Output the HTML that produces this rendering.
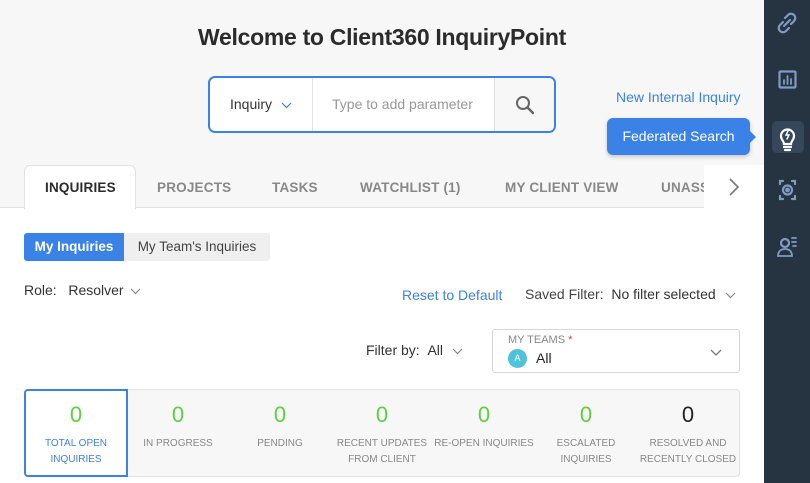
<!DOCTYPE html>
<html><head><style>
*{box-sizing:border-box;margin:0;padding:0}
body{width:810px;height:483px;overflow:hidden;font-family:"Liberation Sans",sans-serif;background:#fff;position:relative;color:#333}
.top{position:absolute;left:0;top:0;width:764px;height:208px;background:#f7f7f7;border-bottom:1px solid #e2e2e2}
.side{position:absolute;left:764px;top:0;width:46px;height:483px;background:#263340}
.abs{position:absolute;white-space:nowrap}
h1{position:absolute;left:0;width:764px;top:24px;text-align:center;font-size:23px;font-weight:bold;color:#2b2b2b;letter-spacing:-0.3px}
.search{position:absolute;left:208px;top:76px;width:348px;height:57px;border:2px solid #3b82e6;border-radius:7px;background:#fff;overflow:hidden}
.tab{position:absolute;top:180px;font-size:13.5px;font-weight:bold;color:#888;letter-spacing:0.2px}
.stat{position:absolute;top:390px;width:102px;text-align:center}
.stat b{display:block;font-size:22px;color:#5dd13d;font-weight:normal;margin-top:12px}
.stat span{display:block;font-size:10px;color:#888;line-height:16px;margin-top:8px}
.chev{display:inline-block;vertical-align:middle;margin-left:6px}
</style></head><body>
<div class="top"></div>
<h1>Welcome to Client360 InquiryPoint</h1>
<div class="search">
 <div class="abs" style="left:20px;top:18px;font-size:14px;color:#333">Inquiry<svg class="chev" style="margin-left:9px" width="11" height="7"><path d="M1 1l4.5 4.5L10 1" fill="none" stroke="#3b82e6" stroke-width="1.2"/></svg></div>
 <div class="abs" style="left:102px;top:0;width:1px;height:53px;background:#e2e2e2"></div>
 <div class="abs" style="left:122px;top:18px;font-size:14px;color:#999">Type to add parameter</div>
 <div class="abs" style="left:284px;top:0;width:62px;height:53px;background:#f7f7f7;border-left:1px solid #e2e2e2"></div>
 <svg class="abs" style="left:305px;top:17px" width="20" height="20" viewBox="0 0 20 20"><circle cx="8" cy="8" r="6" fill="none" stroke="#666" stroke-width="2"/><path d="M12.5 12.5L18 18" stroke="#666" stroke-width="2.4" stroke-linecap="round"/></svg>
</div>
<div class="abs" style="left:616px;top:89px;font-size:14px;color:#3b82e6">New Internal Inquiry</div>
<div class="abs" style="left:607px;top:118px;width:143px;height:37px;background:#3b82e6;border-radius:6px;color:#fff;font-size:14px;line-height:37px;text-align:center;box-shadow:0 2px 4px rgba(0,0,0,.2)">Federated Search</div>
<div class="abs" style="left:749px;top:130px;width:0;height:0;border-top:7px solid transparent;border-bottom:7px solid transparent;border-left:7px solid #3b82e6"></div>
<div class="abs" style="left:24px;top:165px;width:112px;height:44px;background:#fff;border:1px solid #e2e2e2;border-bottom:none;border-radius:6px 6px 0 0"></div>
<div class="tab" style="left:45px;color:#2b2b2b">INQUIRIES</div>
<div class="tab" style="left:157px">PROJECTS</div>
<div class="tab" style="left:272px">TASKS</div>
<div class="tab" style="left:360px">WATCHLIST (1)</div>
<div class="tab" style="left:505px">MY CLIENT VIEW</div>
<div class="tab" style="left:661px;width:44px;overflow:hidden">UNASSIGNED</div>
<div class="abs" style="left:704px;top:165px;width:60px;height:43px;background:#fff"></div>
<svg class="abs" style="left:727px;top:177px" width="14" height="20"><path d="M3 2l8 8-8 8" fill="none" stroke="#777" stroke-width="1.6"/></svg>

<div class="abs" style="left:24px;top:233px;width:100px;height:28px;background:#3b82e6;border-radius:3px 0 0 3px;color:#fff;font-size:13.5px;font-weight:bold;line-height:28px;text-align:center">My Inquiries</div>
<div class="abs" style="left:124px;top:233px;width:146px;height:28px;background:#efefef;border-radius:0 3px 3px 0;color:#444;font-size:13.5px;line-height:28px;text-align:center">My Team's Inquiries</div>
<div class="abs" style="left:24px;top:282px;font-size:14px;color:#333">Role: &nbsp; Resolver<svg class="chev" width="11" height="7"><path d="M1 1l4.5 4.5L10 1" fill="none" stroke="#888" stroke-width="1.2"/></svg></div>
<div class="abs" style="left:402px;top:287px;font-size:14px;color:#3b82e6">Reset to Default</div>
<div class="abs" style="left:525px;top:286px;font-size:14px;color:#333"><span style="color:#444">Saved Filter:</span> &nbsp;No filter selected<svg class="chev" style="margin-left:9px" width="11" height="7"><path d="M1 1l4.5 4.5L10 1" fill="none" stroke="#888" stroke-width="1.2"/></svg></div>
<div class="abs" style="left:366px;top:342px;font-size:14px;color:#333">Filter by: &nbsp;All<svg class="chev" style="margin-left:9px" width="11" height="7"><path d="M1 1l4.5 4.5L10 1" fill="none" stroke="#888" stroke-width="1.2"/></svg></div>
<div class="abs" style="left:492px;top:329px;width:248px;height:44px;border:1px solid #d8d8d8;border-radius:3px;background:#fff">
 <div class="abs" style="left:15px;top:4px;font-size:11px;color:#888">MY TEAMS <span style="color:#e33">*</span></div>
 <div class="abs" style="left:15px;top:19px;width:19px;height:19px;border-radius:50%;background:#4fc3dc;color:#fff;font-size:9px;line-height:19px;text-align:center">A</div>
 <div class="abs" style="left:43px;top:20px;font-size:14px;color:#222">All</div>
 <svg class="abs" style="left:217px;top:19px" width="12" height="8"><path d="M1 1l5 5 5-5" fill="none" stroke="#777" stroke-width="1.3"/></svg>
</div>
<div class="abs" style="left:24px;top:389px;width:716px;height:88px;background:#f7f7f7;border:1px solid #e2e2e2;border-radius:4px"></div>
<div class="abs" style="left:24px;top:389px;width:104px;height:88px;background:#fff;border:2px solid #3b82e6;border-radius:4px 0 0 4px"></div>
<div class="stat" style="left:25px"><b>0</b><span style="color:#3b82e6">TOTAL OPEN<br>INQUIRIES</span></div>
<div class="stat" style="left:127px"><b>0</b><span>IN PROGRESS</span></div>
<div class="stat" style="left:229px"><b>0</b><span>PENDING</span></div>
<div class="stat" style="left:331px"><b>0</b><span>RECENT UPDATES<br>FROM CLIENT</span></div>
<div class="stat" style="left:433px"><b>0</b><span>RE-OPEN INQUIRIES</span></div>
<div class="stat" style="left:535px"><b>0</b><span>ESCALATED<br>INQUIRIES</span></div>
<div class="stat" style="left:637px"><b style="color:#222">0</b><span>RESOLVED AND<br>RECENTLY CLOSED</span></div>

<div class="side"></div>
<svg class="abs" style="left:764px;top:0" width="46" height="270" viewBox="0 0 46 270" fill="none" stroke="#7d9cc4" stroke-width="2.2" stroke-linecap="round">
 <path d="M21 18l3-3a4 4 0 016 6l-3 3M25 28l-3 3a4 4 0 01-6-6l3-3M20 26l6-6"/>
 <rect x="15.5" y="71.5" width="16" height="16" rx="1"/><path d="M20 84v-4M23.5 84v-8M27 84v-5" stroke-width="1.8"/>
 <rect x="8" y="121" width="32" height="32" rx="5" fill="#34475b" stroke="none"/>
 <path d="M20 144c0-3-3-4-3-8a6.5 6.5 0 0113 0c0 4-3 5-3 8z M20 147h7M21 150h5" stroke="#fff"/>
 <path d="M24 131l-2 4h3l-2 4" stroke="#fff" stroke-width="1.4"/>
 <path d="M16 184v-3h3M28 181h3v3M31 196v3h-3M19 199h-3v-3"/><circle cx="23.5" cy="190" r="4.5"/><circle cx="23.5" cy="190" r="1.3" fill="#7d9cc4"/>
 <circle cx="21" cy="243" r="4"/><path d="M14 256c0-5 3-7 7-7s7 2 7 7z M28 238h4M28 242h4M29 246h3" stroke-width="1.8"/>
</svg>
</body></html>
